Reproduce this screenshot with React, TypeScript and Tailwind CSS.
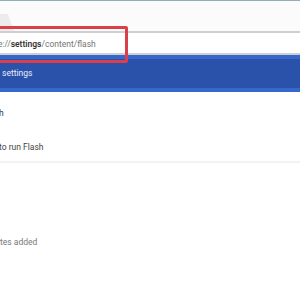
import React from "react"

const font = { fontFamily: "Roboto, 'Liberation Sans', Arial, sans-serif" }

function TabStrip() {
  return (
    <div className="relative h-[30px] bg-[#fbfbfb]">
      {/* edge of the active tab */}
      <svg className="absolute left-0 top-[12px]" width="16" height="18" viewBox="0 0 16 18">
        <path d="M0 1 L8 1 L14 18 L0 18 Z" fill="#ececec" />
      </svg>
    </div>
  )
}

function AddressBar() {
  return (
    <div className="h-[24px] border-y-2 border-[#cfcfcf] bg-white flex items-center pt-[3px]">
      <div className="-ml-[2px] text-[8.5px] text-[#757575] whitespace-nowrap">
        e://<span className="font-semibold text-[#333]">settings</span>/content/flash
      </div>
    </div>
  )
}

function Header() {
  return (
    <div className="h-[37px] bg-[#2a52aa] border-y-4 border-[#3668cc] flex items-center">
      <span className="pl-[2px] text-[8.5px] text-[#e8eefc] whitespace-nowrap">settings</span>
    </div>
  )
}

export default function App() {
  return (
    <div className="relative w-[300px] h-[300px] overflow-hidden bg-white" style={font}>
      <div className="h-px bg-[#8fb0b8]" />
      <TabStrip />
      <AddressBar />
      <Header />

      <div className="flex flex-col">
        <div className="h-[34px] flex items-end pb-[6px]">
          <span className="text-[8.5px] text-[#333] -ml-[1px]">h</span>
        </div>
        <div className="h-[37px] flex items-end pb-[7px] border-b-2 border-[#f3f3f3]">
          <span className="text-[8.5px] text-[#444] -ml-[1px] whitespace-nowrap">to run Flash</span>
        </div>
        <div className="h-[88px] flex items-end pb-[2px]">
          <span className="text-[8.5px] text-[#777] whitespace-nowrap">tes added</span>
        </div>
      </div>

      {/* red annotation box */}
      <div className="absolute left-[-6px] top-[26px] w-[134px] h-[37px] border-[3px] border-[#db3f4b] rounded-[2px]" />
    </div>
  )
}
